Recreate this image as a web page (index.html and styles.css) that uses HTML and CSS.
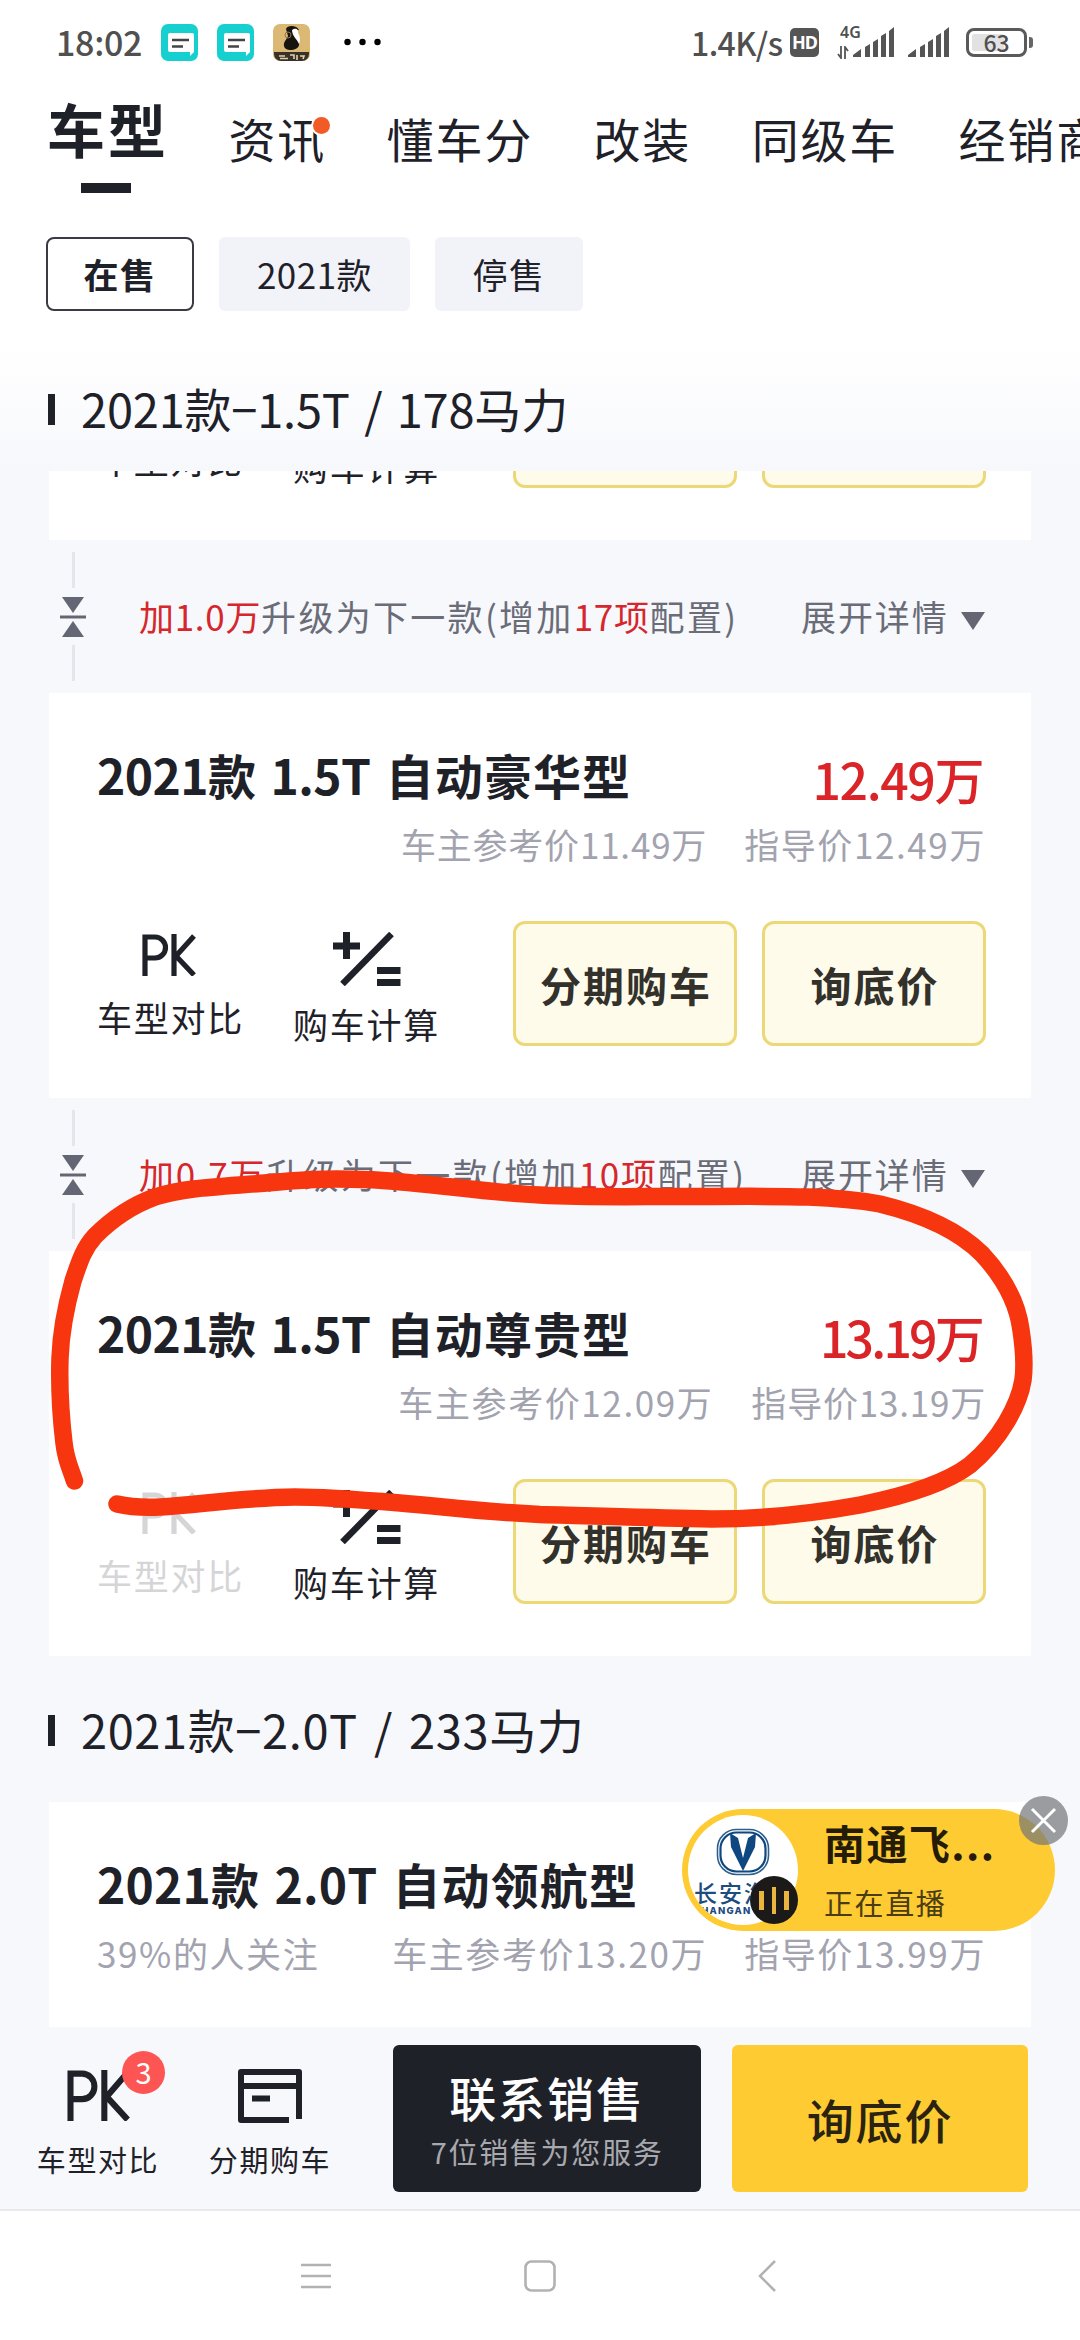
FILE: index.html
```html
<!DOCTYPE html>
<html lang="zh-CN">
<head>
<meta charset="utf-8">
<title>车型</title>
<link rel="stylesheet" href="styles.css">
</head>
<body>
<svg class="defs" width="0" height="0">
  <defs>
    <symbol id="chat" viewBox="0 0 37 37">
      <rect width="37" height="37" rx="7" fill="#16d0cf"/>
      <path d="M9 9h22a2 2 0 0 1 2 2v17l-4 4v-4H9a2 2 0 0 1-2-2V11a2 2 0 0 1 2-2z" fill="#fff"/>
      <path d="M11 16h17M11 22.500h11" stroke="#444" stroke-width="2.600"/>
    </symbol>
    <symbol id="signal" viewBox="0 0 42 30">
      <path d="M0 30v-2l8-6v8zM12 30V20l5-3v13zM20 30V15l5-3v18zM28 30V9l5-3v24zM36 30V4l5-4v30z" fill="#555"/>
    </symbol>
    <symbol id="pk" viewBox="0 0 54 42">
      <path d="M3 42V3h10a10.500 10.500 0 0 1 0 21H3M32 0v42M52 2L34 22l18 19" fill="none" stroke="currentColor" stroke-width="5.200"/>
    </symbol>
    <symbol id="calc" viewBox="0 0 68 54">
      <path d="M0 14h27M13.500 0v27M44 38.500h23.500M44 50.500h23.500" fill="none" stroke="#1f2129" stroke-width="7"/>
      <path d="M58.500 2L9.500 52" fill="none" stroke="#1f2129" stroke-width="6.500"/>
    </symbol>
    <symbol id="merge" viewBox="0 0 26 40">
      <path d="M2 0h22L13 16zM13 24l11 16H2z" fill="#646773"/>
      <path d="M0 20h26" stroke="#646773" stroke-width="3"/>
    </symbol>
  </defs>
</svg>
<div class="phone">
  <header class="status">
    <span class="clock">18:02</span>
    <svg class="app" width="37" height="37"><use href="#chat"/></svg>
    <svg class="app" width="37" height="37"><use href="#chat"/></svg>
    <svg class="app" width="37" height="37" viewBox="0 0 37 37">
      <rect width="37" height="37" rx="7" fill="#dcb875"/>
      <path d="M1 28h35v2a7 7 0 0 1-7 7H8a7 7 0 0 1-7-7z" fill="#3a3129"/>
      <path d="M13 5c1-4 11-4 13 1l-4 1c2 5 5 8 4 14-1 6-14 7-15 1-1-4 3-7 4-10z" fill="#17140f"/>
      <path d="M19 6c4-3 7 0 6 3 3 5 2 9 1 11-2-5-7-8-7-14z" fill="#fff"/>
      <circle cx="15" cy="11" r="3" fill="none" stroke="#8b7550"/>
      <path d="M6 32h6M7 34.500h8M17 31h4v4M24 31v5M27 32h4l-1 3" stroke="#e2d2aa" stroke-width="1.600" fill="none"/>
    </svg>
    <svg class="more" width="37" height="8"><g fill="#000"><circle cx="3.500" cy="4" r="3.200"/><circle cx="18.500" cy="4" r="3.200"/><circle cx="33.500" cy="4" r="3.200"/></g></svg>
    <span class="speed">1.4K/s</span>
    <span class="hd">HD</span>
    <span class="net"><span>4G</span><svg width="12" height="13" viewBox="0 0 12 13"><path d="M4 0v12L1 8M8 13V1l3 4" fill="none" stroke="#555" stroke-width="1.800"/></svg></span>
    <svg class="sig" width="42" height="30"><use href="#signal"/></svg>
    <svg class="sig sig2" width="42" height="30"><use href="#signal"/></svg>
    <span class="battery"><i class="level"></i>63</span><i class="cap"></i>
  </header>

  <nav class="tabs">
    <span class="tab active">车型</span>
    <span class="tab">资讯<i class="dot"></i></span>
    <span class="tab">懂车分</span>
    <span class="tab">改装</span>
    <span class="tab">同级车</span>
    <span class="tab">经销商</span>
  </nav>

  <div class="filters">
    <span class="chip on">在售</span>
    <span class="chip mid">2021款</span>
    <span class="chip">停售</span>
  </div>

  <h2 class="group sticky"><i></i><span>2021款−1.5T / 178马力</span></h2>

  <main class="list">
    <section class="card cut">
      <div class="actions">
        <div class="act pk"><svg width="54" height="42"><use href="#pk"/></svg><span>车型对比</span></div>
        <div class="act calc"><svg width="68" height="54"><use href="#calc"/></svg><span>购车计算</span></div>
        <span class="btn first"></span>
        <span class="btn"></span>
      </div>
    </section>

    <div class="upgrade">
      <div class="rail"><i></i><svg width="26" height="40"><use href="#merge"/></svg><i></i></div>
      <p><b>加1.0万</b>升级为下一款(增加<b>17项</b>配置)</p>
      <span class="expand">展开详情<i></i></span>
    </div>

    <section class="card">
      <div class="top"><h3><span class="spec">2021款 1.5T </span>自动豪华型</h3><span class="price">12.49万</span></div>
      <div class="sub"><span>车主参考价11.49万</span><span class="wide">指导价12.49万</span></div>
      <div class="actions">
        <div class="act pk"><svg width="54" height="42"><use href="#pk"/></svg><span>车型对比</span></div>
        <div class="act calc"><svg width="68" height="54"><use href="#calc"/></svg><span>购车计算</span></div>
        <button class="btn first">分期购车</button>
        <button class="btn">询底价</button>
      </div>
    </section>

    <div class="upgrade loose">
      <div class="rail"><i></i><svg width="26" height="40"><use href="#merge"/></svg><i></i></div>
      <p><b>加0.7万</b>升级为下一款(增加<b>10项</b>配置)</p>
      <span class="expand">展开详情<i></i></span>
    </div>

    <section class="card">
      <div class="top"><h3><span class="spec">2021款 1.5T </span>自动尊贵型</h3><span class="price tight">13.19万</span></div>
      <div class="sub sub2"><span class="wide">车主参考价12.09万</span><span>指导价13.19万</span></div>
      <div class="actions">
        <div class="act pk off"><svg width="54" height="42"><use href="#pk"/></svg><span>车型对比</span></div>
        <div class="act calc"><svg width="68" height="54"><use href="#calc"/></svg><span>购车计算</span></div>
        <button class="btn first">分期购车</button>
        <button class="btn">询底价</button>
      </div>
    </section>

    <h2 class="group second"><i></i><span>2021款−2.0T / 233马力</span></h2>

    <section class="card last">
      <div class="top"><h3><span class="spec big">2021款 2.0T </span>自动领航型</h3></div>
      <div class="sub"><span class="follow wide">39%的人关注</span><span class="wide">车主参考价13.20万</span><span class="wide">指导价13.99万</span></div>
    </section>
  </main>

  <footer class="bar">
    <div class="tool t1"><svg width="63" height="51" viewBox="0 0 54 42" preserveAspectRatio="none"><use href="#pk" width="54" height="42"/></svg><span>车型对比</span><b class="badge">3</b></div>
    <div class="tool t2"><svg width="64" height="54" viewBox="0 0 64 54"><path d="M61 50V3H3v48h48M3 17h58M14 29.500h18" fill="none" stroke="#1f2129" stroke-width="6" stroke-linejoin="round"/></svg><span>分期购车</span></div>
    <button class="contact"><strong>联系销售</strong><small>7位销售为您服务</small></button>
    <button class="ask">询底价</button>
  </footer>

  <nav class="sysnav">
    <svg width="30" height="26" viewBox="0 0 30 26"><path d="M0 2h30M0 13h30M0 24h30" stroke="#b2b2b2" stroke-width="2.400"/></svg>
    <svg width="32" height="32" viewBox="0 0 32 32"><rect x="1.500" y="1.500" width="29" height="29" rx="6" fill="none" stroke="#b2b2b2" stroke-width="2.600"/></svg>
    <svg width="18" height="32" viewBox="0 0 18 32"><path d="M17 1L2 16l15 15" fill="none" stroke="#b2b2b2" stroke-width="2.600"/></svg>
  </nav>

  <aside class="live">
    <span class="avatar">
      <svg width="54" height="48" viewBox="0 0 54 48">
        <rect x="1.500" y="1.500" width="51" height="45" rx="19" fill="none" stroke="#2c5f8e" stroke-width="1.600"/>
        <rect x="4.500" y="4.500" width="45" height="39" rx="16" fill="none" stroke="#0f4780" stroke-width="2.200"/>
        <path d="M14 5l8 5 5 20 5-20 8-5-1 14-12 24-12-24z" fill="#0f4780"/>
      </svg>
      <b>长安汽</b><em>CHANGAN</em>
    </span>
    <span class="eq"><i></i><i></i><i></i></span>
    <span class="info"><strong>南通飞...</strong><small>正在直播</small></span>
    <svg class="close" width="49" height="49" viewBox="0 0 49 49"><circle cx="24.500" cy="24.500" r="24.500" fill="#727577" fill-opacity=".7"/><path d="M13 13l23 23M36 13L13 36" stroke="#fff" stroke-width="3"/></svg>
  </aside>

  <svg class="marker" width="1080" height="400" viewBox="0 1150 1080 400">
    <path d="M74.500 1481C70 1467 66 1461 64 1443C60 1410 59 1390 60 1358C61 1330 66 1306 73 1281C80 1260 84 1248 95 1236C111 1220 133 1205 155 1197C190 1186 225 1187 289 1181C330 1178 350 1179 376 1180C430 1183 480 1192 540 1195C600 1198 640 1196 712 1196.500C790 1196 835 1196 880 1204C925 1215 960 1232 982 1254C1008 1282 1018 1307 1021 1330C1024 1350 1025 1365 1023 1380C1019 1405 1000 1440 970 1465C945 1484 900 1497 860 1505C810 1514 760 1519 712 1519C650 1518 600 1516 540 1514.500C470 1511 440 1506 400 1503C350 1499 320 1497 295 1497C235 1498 200 1505 160 1507C140 1508 130 1507 117 1504" fill="none" stroke="#f7350f" stroke-width="17.500" stroke-linecap="round" stroke-linejoin="round"/>
  </svg>
</div>
</body>
</html>
```
FILE: styles.css
```css
* { box-sizing: border-box; }
body { margin: 0; font-family: "Noto Sans CJK SC", sans-serif; color: #1f2129; background: #fff; }
button { font-family: inherit; color: inherit; padding: 0; margin: 0; border: 0; }
i, em { font-style: normal; }
h2, h3, p { margin: 0; font-weight: 400; }
svg { flex: none; display: block; }
.defs { position: absolute; }
.phone { position: relative; width: 1080px; height: 2340px; overflow: hidden; display: flex; flex-direction: column; white-space: nowrap; }
.phone > * { flex: none; }

/* status bar */
.status { height: 84px; padding-left: 56px; display: flex; align-items: center; color: #505050; }
.clock { width: 105px; font-size: 34px; font-weight: 500; letter-spacing: -.3px; line-height: 40px; }
.app { margin-right: 19px; }
.more { margin-left: 15px; }
.speed { margin-left: 310px; width: 99px; font-size: 32px; font-weight: 500; letter-spacing: -.6px; line-height: 40px; }
.hd { width: 29px; height: 29px; border-radius: 5px; background: #555; color: #fff; font: 700 18px/29px "Noto Sans", sans-serif; text-align: center; letter-spacing: -1px; }
.net { width: 26px; height: 34px; margin-left: 18px; display: flex; flex-direction: column; justify-content: space-between; font: 600 16px/15px "Noto Sans", sans-serif; padding: 0; }
.net span { padding-left: 3px; }
.sig { margin-left: -10px; }
.sig2 { margin-left: 13px; }
.battery { position: relative; width: 61px; height: 29px; margin-left: 16px; border: 3px solid #5a5a5a; border-radius: 8px; font-size: 23px; font-weight: 500; line-height: 22px; text-align: center; }
.level { position: absolute; left: 3px; top: 3px; width: 32px; height: 17px; background: #e2e2e2; z-index: -1; border-radius: 2px; }
.cap { width: 4px; height: 11px; margin-left: 2px; background: #666; border-radius: 0 3px 3px 0; }

/* tabs */
.tabs { height: 142px; padding-left: 47px; display: flex; gap: 60.500px; overflow: hidden; }
.tab { position: relative; flex: none; padding-top: 24px; font-size: 47px; letter-spacing: 1.800px; line-height: 60px; }
.tab.active { width: 121px; padding-top: 9px; font-size: 58px; font-weight: 700; letter-spacing: 3px; line-height: 70px; }
.tab.active::after { content: ""; display: block; width: 50px; height: 10px; margin: 20px 0 0 34px; background: #1f2129; }
.dot { position: absolute; left: 84px; top: 33px; width: 17px; height: 17px; border-radius: 50%; background: #f25a26; box-shadow: 0 0 0 2px #fff; }

/* filters */
.filters { height: 117px; padding: 11px 0 0 46px; display: flex; gap: 25px; }
.chip { width: 148px; height: 74px; border-radius: 6px; background: #f2f3f8; font-size: 35px; letter-spacing: 1.600px; line-height: 73px; text-align: center; }
.chip.on { background: #fff; border: 2px solid #3a3b42; border-radius: 8px; font-weight: 700; line-height: 69px; }
.chip.mid { width: 191px; letter-spacing: .5px; }

/* group titles */
.group { height: 146px; padding: 2px 0 0 48px; display: flex; align-items: center; font-size: 47px; line-height: 70px; letter-spacing: -.2px; word-spacing: 4px; }
.group span { margin-top: -2px; }
.group i { width: 7px; height: 31px; margin-right: 26px; background: #1f2129; }
.group.sticky { height: 128px; padding-top: 4px; margin: 0; background: linear-gradient(#fff, #f7f8fc); }
.group.second { letter-spacing: .6px; word-spacing: 5px; }
.list { height: 1556px; background: #f7f8fc; overflow: hidden; }

/* trim cards */
.card { width: 982px; height: 405px; margin-left: 49px; padding: 0 45px 0 48px; background: #fff; }
.card.cut { height: 69px; overflow: hidden; display: flex; flex-direction: column; justify-content: flex-end; padding-bottom: 52px; }
.top { height: 123px; display: flex; justify-content: space-between; padding-top: 45px; }
.top h3 { font-size: 48px; font-weight: 700; letter-spacing: 1.100px; line-height: 72px; }
.spec { letter-spacing: -.6px; word-spacing: 5px; }
.spec.big { letter-spacing: .2px; word-spacing: 4px; }
.price { color: #da2427; font-size: 50px; font-weight: 500; letter-spacing: -1.400px; line-height: 72px; padding-top: 4px; margin-right: 3px; }
.price.tight { letter-spacing: -2.800px; margin-right: 4px; }
.sub { height: 105px; display: flex; justify-content: flex-end; gap: 37px; padding: 8px 0 0 0; font-size: 35px; letter-spacing: .8px; line-height: 40px; color: #a2a3af; }
.sub .wide { letter-spacing: 1.600px; }
.sub .follow { margin-right: auto; }
.sub2 { gap: 38px; }
.actions { flex: none; height: 125px; display: flex; }
.act { width: 147px; display: flex; flex-direction: column; align-items: center; font-size: 35px; letter-spacing: 1.700px; line-height: 40px; }
.pk { padding-top: 13px; gap: 21px; }
.pk svg { margin-right: 3px; }
.calc { margin-left: 49px; padding-top: 11px; gap: 18px; }
.off { color: #d5d5d7; }
.btn { width: 224px; height: 125px; margin-left: 25px; border: 3px solid #ecd877; border-radius: 12px; background: #fffbea; color: #33312c; font-size: 41px; font-weight: 700; letter-spacing: 2px; line-height: 116px; text-indent: 2px; }
.btn.first { margin-left: 73px; }

/* upgrade rows */
.upgrade { height: 153px; display: flex; align-items: center; padding-left: 60px; font-size: 35px; line-height: 50px; letter-spacing: 1.900px; color: #6a6c78; }
.rail { width: 26px; height: 129px; margin-right: 53px; display: flex; flex-direction: column; align-items: center; justify-content: space-between; }
.rail i { width: 3px; height: 36px; background: #e5e6eb; }
.upgrade p { width: 662px; margin-top: -2px; letter-spacing: 2.300px; }
.upgrade b { color: #d5272c; font-weight: 400; letter-spacing: .7px; }
.upgrade.loose b { letter-spacing: 1.700px; }
.expand { display: flex; align-items: center; gap: 12px; margin-top: -2px; }
.expand i { border: 12px solid transparent; border-top: 18px solid #646773; border-bottom: 0; margin-top: 10px; }

/* bottom bar */
.bar { height: 184px; padding-top: 18px; display: flex; background: #f7f8fc; border-bottom: 2px solid #e9eaec; }
.tool { position: relative; width: 122px; display: flex; flex-direction: column; align-items: center; font-size: 29px; letter-spacing: 1.600px; line-height: 36px; }
.t1 { margin-left: 37px; padding-top: 25px; gap: 20px; }
.t2 { margin-left: 50px; padding-top: 24px; gap: 18px; }
.badge { position: absolute; left: 85px; top: 6px; width: 43px; height: 43px; border-radius: 50%; background: #fc5553; color: #fff; font-size: 29px; font-weight: 400; line-height: 41px; text-align: center; letter-spacing: 0; }
.contact { width: 308px; height: 147px; margin-left: 62px; border-radius: 6px; background: #1f2129; color: #fff; display: flex; flex-direction: column; align-items: center; justify-content: center; }
.contact strong { font-size: 47px; font-weight: 500; letter-spacing: 1.900px; line-height: 60px; }
.contact small { font-size: 29px; letter-spacing: 1.700px; line-height: 40px; color: #a8a9ad; padding-top: 4px; }
.ask { width: 296px; height: 147px; margin-left: 31px; border-radius: 6px; background: #fecb32; color: #2a2310; font-size: 47px; font-weight: 500; letter-spacing: 1.900px; }

/* system navigation */
.sysnav { height: 129px; padding-left: 301px; display: flex; align-items: center; background: #fff; }
.sysnav svg:nth-child(2) { margin-left: 193px; }
.sysnav svg:nth-child(3) { margin-left: 202px; }

/* floating live pill */
.live { position: absolute; left: 682px; top: 1809px; width: 373px; height: 122px; border-radius: 61px; background: #fecb32; display: flex; align-items: center; padding-left: 6px; }
.avatar { width: 110px; height: 110px; border-radius: 50%; background: #fff; overflow: hidden; display: flex; flex-direction: column; align-items: center; padding-top: 13px; color: #1c4c80; }
.avatar b { width: 104px; padding-left: 3px; font-size: 23px; font-weight: 500; line-height: 24px; margin-top: 4px; letter-spacing: 2px; }
.avatar em { width: 104px; padding-left: 2px; margin-top: 2px; font: 800 9.500px/10px Inter, sans-serif; letter-spacing: 1.200px; }
.eq { position: absolute; left: 68px; top: 67px; width: 48px; height: 48px; border-radius: 50%; background: #1b1a18; display: flex; gap: 8px; align-items: center; justify-content: center; }
.eq i { width: 4.500px; height: 19px; background: #eab53f; }
.eq i:nth-child(2) { height: 27px; }
.info { display: flex; flex-direction: column; margin-left: 26px; padding-top: 5px; color: #241c08; }
.info strong { font-size: 41px; font-weight: 700; letter-spacing: 1.400px; line-height: 58px; }
.info small { font-size: 29px; letter-spacing: 1.600px; line-height: 62px; color: #4a3c14; }
.close { position: absolute; left: 337px; top: -13px; }

/* hand-drawn mark over the list */
.marker { position: absolute; left: 0; top: 1150px; }
```
